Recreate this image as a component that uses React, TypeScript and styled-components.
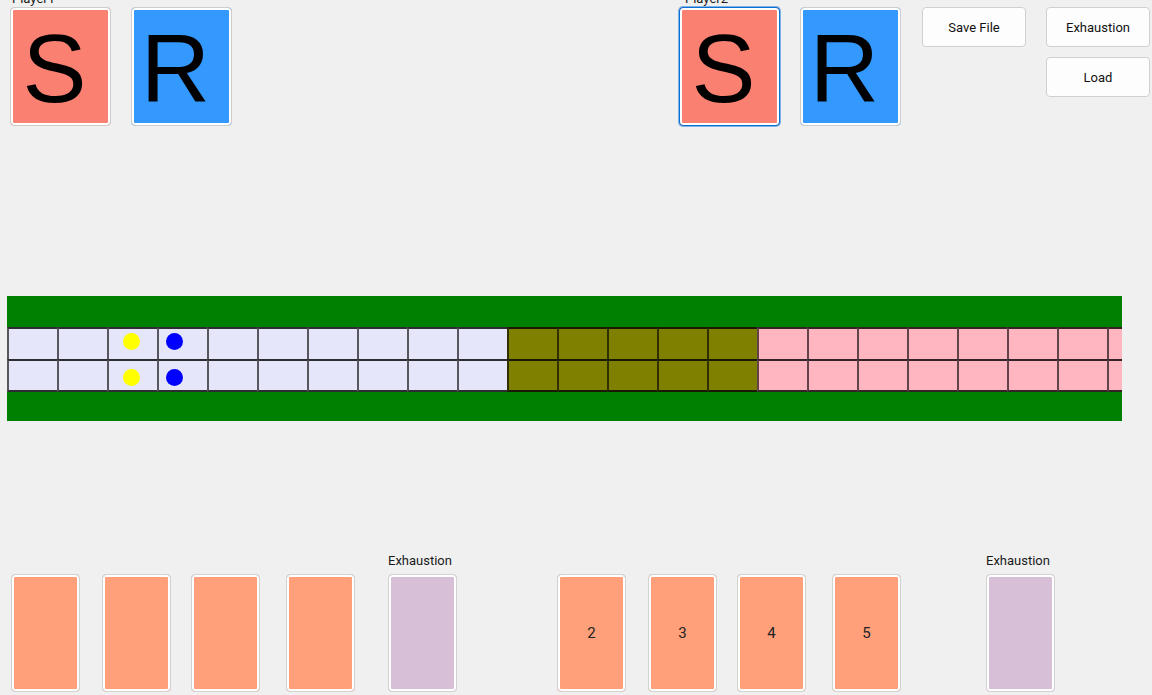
import React from "react";
import styled, { createGlobalStyle } from "styled-components";

const GlobalStyle = createGlobalStyle`
  html, body { margin: 0; padding: 0; background: #f0f0f0; }
  body { font-family: Roboto, "Noto Sans", "Liberation Sans", sans-serif; }
  #root { width: 1152px; height: 695px; }
`;

const Page = styled.div`
  width: 1152px;
  height: 695px;
  overflow: hidden;
  background: #f0f0f0;
  display: flex;
  flex-direction: column;
  color: #1a1a1a;
  font-size: 13px;
`;

const TopBar = styled.div`
  display: flex;
  align-items: flex-start;
  padding-left: 10px;
  height: 126px;
  flex: none;
`;

const PlayerGroup = styled.div<{ $offset: number }>`
  display: flex;
  flex-direction: column;
  margin-left: ${(p) => p.$offset}px;
`;

const GroupLabel = styled.div<{ $indent: number }>`
  height: 15px;
  line-height: 15px;
  margin-top: -9px;
  margin-bottom: 1px;
  padding-left: ${(p) => p.$indent}px;
  font-size: 13px;
  white-space: nowrap;
`;

const CardRow = styled.div`
  display: flex;
  gap: 20px;
`;

const BigCard = styled.button<{ $color: string; $focused?: boolean }>`
  width: 101px;
  height: 119px;
  box-sizing: border-box;
  margin: 0;
  padding: 5px 12px 0 0;
  border: 1px solid ${(p) => (p.$focused ? "#0a6fd0" : "#cdcdcd")};
  border-radius: 4px;
  background: ${(p) => p.$color};
  box-shadow: inset 0 0 0 2px #ffffff
    ${(p) => (p.$focused ? ", 0 0 0 1px #7fb2e5" : "")};
  display: flex;
  align-items: center;
  justify-content: center;
  font-family: "Liberation Sans", Arial, sans-serif;
  font-size: 96px;
  line-height: 1;
  color: #000;
  cursor: pointer;
`;

const ButtonColumn = styled.div<{ $offset: number }>`
  display: flex;
  flex-direction: column;
  gap: 10px;
  padding-top: 7px;
  margin-left: ${(p) => p.$offset}px;
`;

const ActionButton = styled.button`
  width: 104px;
  height: 40px;
  box-sizing: border-box;
  margin: 0;
  padding: 0;
  border: 1px solid #d0d0d0;
  border-radius: 4px;
  background: #fdfdfd;
  font-family: Roboto, "Noto Sans", sans-serif;
  font-size: 13px;
  color: #111;
  cursor: pointer;
`;

const Board = styled.div`
  margin: 170px 0 0 7px;
  width: 1115px;
  height: 125px;
  flex: none;
  background: #008000;
  display: flex;
  flex-direction: column;
  overflow: hidden;
`;

const Verge = styled.div<{ $h: number }>`
  height: ${(p) => p.$h}px;
  flex: none;
`;

const Lane = styled.div`
  display: flex;
  flex: none;
`;

const zoneColor: Record<string, string> = {
  home: "#e6e6fa",
  mid: "#808000",
  away: "#ffb6c1",
};

const Cell = styled.div<{ $zone: string; $last?: boolean }>`
  position: relative;
  flex: none;
  width: 50px;
  height: ${(p) => (p.$last ? 33 : 32)}px;
  box-sizing: border-box;
  background: ${(p) => zoneColor[p.$zone]};
  border-left: 2px solid rgba(0, 0, 0, 0.62);
  border-top: 2px solid rgba(0, 0, 0, 0.8);
  ${(p) => (p.$last ? "border-bottom: 2px solid rgba(0, 0, 0, 0.8);" : "")}
`;

const Piece = styled.span<{ $color: string; $top: number; $left: number }>`
  position: absolute;
  top: ${(p) => p.$top}px;
  left: ${(p) => p.$left}px;
  width: 17px;
  height: 17px;
  border-radius: 50%;
  background: ${(p) => p.$color};
`;

const Hand = styled.div`
  display: flex;
  align-items: flex-end;
  margin-top: 132px;
  flex: none;
`;

const Slot = styled.div<{ $gap: number }>`
  display: flex;
  flex-direction: column;
  margin-left: ${(p) => p.$gap}px;
`;

const SlotLabel = styled.div`
  height: 15px;
  line-height: 15px;
  margin-bottom: 6px;
  font-size: 13px;
  white-space: nowrap;
`;

const SmallCard = styled.button<{ $color: string }>`
  width: 69px;
  height: 118px;
  box-sizing: border-box;
  margin: 0;
  padding: 0;
  border: 1px solid #d2d2d2;
  border-radius: 4px;
  background: ${(p) => p.$color};
  box-shadow: inset 0 0 0 2px #ffffff;
  display: flex;
  align-items: center;
  justify-content: center;
  font-family: Roboto, "Noto Sans", sans-serif;
  font-size: 15px;
  color: #222;
  cursor: pointer;
`;

type Zone = "home" | "mid" | "away";
const cells: Zone[] = [
  ...Array(10).fill("home"),
  ...Array(5).fill("mid"),
  ...Array(8).fill("away"),
];

const pieces: Record<number, { color: string; left: number }> = {
  2: { color: "#ffff00", left: 14 },
  3: { color: "#0000ff", left: 7 },
};

const hand = [
  { gap: 11, color: "#ffa07a", text: "" },
  { gap: 22, color: "#ffa07a", text: "" },
  { gap: 20, color: "#ffa07a", text: "" },
  { gap: 26, color: "#ffa07a", text: "" },
  { gap: 33, color: "#d8bfd8", text: "", label: "Exhaustion" },
  { gap: 100, color: "#ffa07a", text: "2" },
  { gap: 22, color: "#ffa07a", text: "3" },
  { gap: 20, color: "#ffa07a", text: "4" },
  { gap: 26, color: "#ffa07a", text: "5" },
  { gap: 85, color: "#d8bfd8", text: "", label: "Exhaustion" },
];

function LaneRow({ row, last }: { row: number; last?: boolean }) {
  return (
    <Lane>
      {cells.map((z, i) => (
        <Cell key={i} $zone={z} $last={last}>
          {pieces[i] && (
            <Piece
              $color={pieces[i].color}
              $left={pieces[i].left}
              $top={row === 0 ? 4 : 8}
            />
          )}
        </Cell>
      ))}
    </Lane>
  );
}

export default function App() {
  return (
    <Page>
      <GlobalStyle />
      <TopBar>
        <PlayerGroup $offset={0}>
          <GroupLabel $indent={2}>Player1</GroupLabel>
          <CardRow>
            <BigCard $color="#fa8072">S</BigCard>
            <BigCard $color="#3399ff">R</BigCard>
          </CardRow>
        </PlayerGroup>
        <PlayerGroup $offset={447}>
          <GroupLabel $indent={6}>Player2</GroupLabel>
          <CardRow>
            <BigCard $color="#fa8072" $focused>
              S
            </BigCard>
            <BigCard $color="#3399ff">R</BigCard>
          </CardRow>
        </PlayerGroup>
        <ButtonColumn $offset={21}>
          <ActionButton>Save File</ActionButton>
        </ButtonColumn>
        <ButtonColumn $offset={20}>
          <ActionButton>Exhaustion</ActionButton>
          <ActionButton>Load</ActionButton>
        </ButtonColumn>
      </TopBar>

      <Board>
        <Verge $h={31} />
        <LaneRow row={0} />
        <LaneRow row={1} last />
        <Verge $h={29} />
      </Board>

      <Hand>
        {hand.map((c, i) => (
          <Slot key={i} $gap={c.gap}>
            {c.label && <SlotLabel>{c.label}</SlotLabel>}
            <SmallCard $color={c.color}>{c.text}</SmallCard>
          </Slot>
        ))}
      </Hand>
    </Page>
  );
}
